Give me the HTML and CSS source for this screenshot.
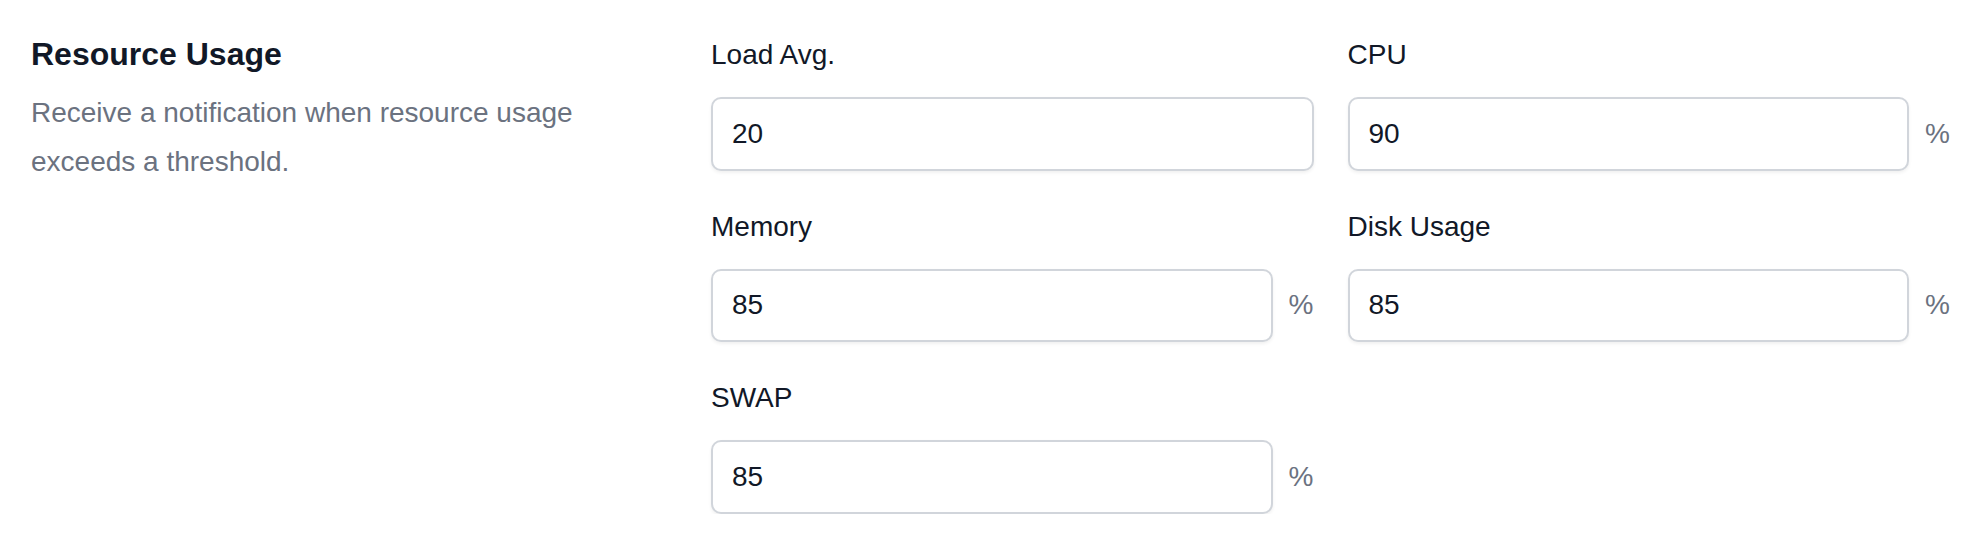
FILE: index.html
```html
<!DOCTYPE html>
<html lang="en">
<head>
<meta charset="utf-8">
<title>Resource Usage</title>
<link rel="stylesheet" href="styles.css">
</head>
<body>
  <section class="settings-section">
    <div class="intro">
      <h2 class="intro-title">Resource Usage</h2>
      <p class="intro-text">Receive a notification when resource usage exceeds a threshold.</p>
    </div>

    <div class="fields">
      <div class="field">
        <label class="field-label" for="load">Load Avg.</label>
        <div class="field-control">
          <input class="field-input" id="load" type="text" value="20">
        </div>
      </div>

      <div class="field">
        <label class="field-label" for="cpu">CPU</label>
        <div class="field-control">
          <input class="field-input" id="cpu" type="text" value="90">
          <span class="field-unit">%</span>
        </div>
      </div>

      <div class="field">
        <label class="field-label" for="memory">Memory</label>
        <div class="field-control">
          <input class="field-input" id="memory" type="text" value="85">
          <span class="field-unit">%</span>
        </div>
      </div>

      <div class="field">
        <label class="field-label" for="disk">Disk Usage</label>
        <div class="field-control">
          <input class="field-input" id="disk" type="text" value="85">
          <span class="field-unit">%</span>
        </div>
      </div>

      <div class="field">
        <label class="field-label" for="swap">SWAP</label>
        <div class="field-control">
          <input class="field-input" id="swap" type="text" value="85">
          <span class="field-unit">%</span>
        </div>
      </div>
    </div>
  </section>
</body>
</html>
```

FILE: styles.css
```css
* {
  box-sizing: border-box;
}

html,
body {
  margin: 0;
  padding: 0;
  background: #ffffff;
}

body {
  font-family: "Liberation Sans", Arial, sans-serif;
  color: #111827;
}

/* Two-part settings block: description on the left, form on the right */
.settings-section {
  display: grid;
  grid-template-columns: 680px 1fr;
  padding: 34px 34px 0 31px;
}

.intro {
  max-width: 600px;
}

.intro-title {
  margin: 0;
  font-size: 32px;
  line-height: 40px;
  font-weight: 700;
  color: #111827;
}

.intro-text {
  margin: 14px 0 0;
  font-size: 28px;
  line-height: 49px;
  color: #6b7280;
}

/* Form grid */
.fields {
  display: grid;
  grid-template-columns: 1fr 1fr;
  column-gap: 34px;
  row-gap: 35px;
}

.field {
  display: flex;
  flex-direction: column;
}

.field-label {
  display: block;
  font-size: 28px;
  line-height: 42px;
  color: #111827;
}

.field-control {
  display: flex;
  align-items: center;
  margin-top: 21px;
}

.field-input {
  flex: 1 1 auto;
  min-width: 0;
  height: 73.5px;
  padding: 0 19px;
  font-family: inherit;
  font-size: 28px;
  color: #111827;
  background: #ffffff;
  border: 2px solid #d1d5db;
  border-radius: 10px;
  box-shadow: 0 2px 3.5px rgba(0, 0, 0, 0.06);
  outline: none;
}

.field-unit {
  flex: 0 0 auto;
  margin-left: 16px;
  font-size: 28px;
  line-height: 42px;
  color: #6b7280;
}
```
